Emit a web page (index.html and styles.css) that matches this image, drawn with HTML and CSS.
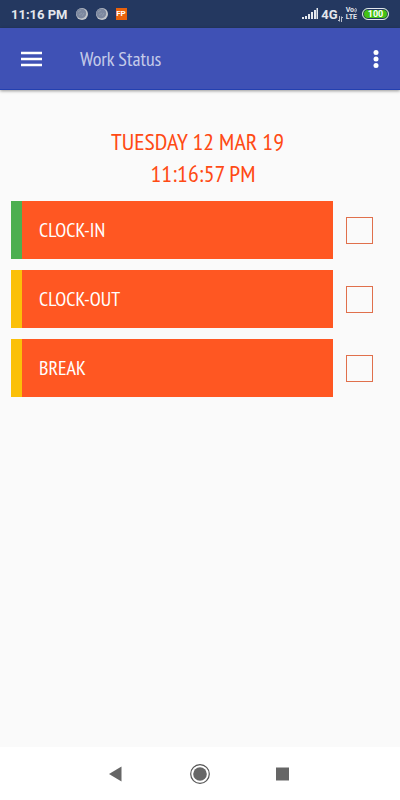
FILE: index.html
```html
<!DOCTYPE html>
<html lang="en">
<head>
<meta charset="utf-8">
<meta name="viewport" content="width=device-width, initial-scale=1">
<title>Work Status</title>
<link rel="stylesheet" href="styles.css">
</head>
<body>
<div class="status-bar">
  <span class="clock">11:16 PM</span>
  <svg class="moon" viewBox="0 0 12 12" aria-hidden="true"><circle cx="6" cy="6" r="6" fill="#c3c6ca"/><circle cx="5.2" cy="5.4" r="5" fill="#7d889f"/><path d="M2 4l3-2M3 7l3-2M6 8l2-3" stroke="#909bad" stroke-width="1"/></svg>
  <svg class="moon" viewBox="0 0 12 12" aria-hidden="true"><circle cx="6" cy="6" r="6" fill="#c3c6ca"/><circle cx="5.2" cy="5.4" r="5" fill="#7d889f"/><path d="M2 4l3-2M3 7l3-2M6 8l2-3" stroke="#909bad" stroke-width="1"/></svg>
  <span class="app-badge">FP</span>
  <div class="signals">
    <svg class="bars" viewBox="0 0 16 12" aria-hidden="true"><path d="M0 9h2v2H0zM3 8h2v3H3zM6 6h2v5H6zM9 4h2v7H9zM12 2h2v9h-2zM14.500 0H16v11h-1.500z" fill="#e4e7ed"/></svg>
    <span class="network">4G<svg class="arrows" viewBox="0 0 5 6" aria-hidden="true"><path d="M1.500 0v5M0 4l1.500 1.500M3.500 6V1M5 2L3.500.5" fill="none" stroke="#c9ced9" stroke-width=".9"/></svg></span>
    <span class="volte"><span class="volte-line">Vo<svg class="waves" viewBox="0 0 3 6" aria-hidden="true"><path d="M.5 2.500q1 1 0 2M1.500 1q2 2 0 4.500" fill="none" stroke="#e4e7ed" stroke-width=".8"/></svg></span><span class="volte-line">LTE</span></span>
    <span class="battery">100</span>
  </div>
</div>
<header class="app-bar">
  <button class="icon-button" type="button" aria-label="Menu"><svg class="menu-icon" viewBox="0 0 21 16"><path d="M0 2h21M0 8h21M0 14h21" stroke="#fff" stroke-width="2.300"/></svg></button>
  <h1 class="title">Work Status</h1>
  <button class="icon-button" type="button" aria-label="More options"><svg class="more-icon" viewBox="0 0 6 20"><g fill="#fff"><circle cx="3" cy="3.500" r="2.500"/><circle cx="3" cy="10" r="2.500"/><circle cx="3" cy="16.500" r="2.500"/></g></svg></button>
</header>
<main class="content">
  <div class="datetime"><div>TUESDAY 12 MAR 19</div><div class="time">11:16:57 PM</div></div>
  <div class="row"><button class="action active" type="button" id="clock-in">CLOCK-IN</button><input class="check" type="checkbox" aria-labelledby="clock-in"></div>
  <div class="row"><button class="action" type="button" id="clock-out">CLOCK-OUT</button><input class="check" type="checkbox" aria-labelledby="clock-out"></div>
  <div class="row"><button class="action" type="button" id="break">BREAK</button><input class="check" type="checkbox" aria-labelledby="break"></div>
</main>
<nav class="nav-bar" aria-label="System">
  <button class="icon-button" type="button" aria-label="Back"><svg class="nav-icon" viewBox="0 0 20 20"><path d="M3 10L15.500 2.500v15z" fill="#666"/></svg></button>
  <button class="icon-button" type="button" aria-label="Home"><svg class="nav-icon" viewBox="0 0 20 20"><circle cx="10" cy="10" r="9.300" fill="none" stroke="#555" stroke-width="1.200"/><circle cx="10" cy="10" r="6.800" fill="#666"/></svg></button>
  <button class="icon-button" type="button" aria-label="Recent apps"><svg class="nav-icon" viewBox="0 0 20 20"><path d="M2 3.500h13v13H2z" fill="#666"/></svg></button>
</nav>
</body>
</html>
```
FILE: styles.css
```css
* {
  box-sizing: border-box;
}

body {
  margin: 0;
  min-height: 100vh;
  display: flex;
  flex-direction: column;
  background: #fafafa;
  font-family: "PT Sans Narrow", "Roboto Condensed", "Open Sans Condensed", "Noto Sans Condensed", Lato, sans-serif;
}

button {
  font-family: inherit;
  border: 0;
  cursor: pointer;
}

svg {
  display: block;
}

.status-bar {
  height: 28px;
  padding: 0 11px;
  display: flex;
  align-items: center;
  gap: 8px;
  background: #243860;
  color: #e4e7ed;
  font-family: Roboto, sans-serif;
  font-weight: 700;
}

.clock {
  font-size: 13px;
}

.moon {
  width: 12px;
  height: 12px;
}

.app-badge {
  width: 11px;
  height: 12px;
  background: #e8620c;
  color: #fff;
  font-size: 8px;
  line-height: 12px;
  text-align: center;
}

.signals {
  margin-left: auto;
  display: flex;
  align-items: center;
  gap: 3px;
}

.bars {
  width: 16px;
  height: 12px;
}

.network {
  display: flex;
  align-items: flex-end;
  font-size: 13px;
}

.arrows {
  width: 5px;
  height: 6px;
}

.volte {
  display: flex;
  flex-direction: column;
  font-size: 7px;
  line-height: 7px;
}

.volte-line {
  display: flex;
  height: 7px;
}

.waves {
  width: 3px;
  height: 6px;
}

.battery {
  width: 27px;
  height: 12px;
  margin-left: 2px;
  border: 1px solid #e4e7ed;
  border-radius: 6px;
  box-shadow: inset 0 0 0 1px #243860;
  background: #43c213;
  color: #fff;
  font-size: 9px;
  line-height: 10px;
  text-align: center;
}

.app-bar {
  height: 62px;
  padding: 0 21px;
  display: flex;
  align-items: center;
  background: #3f51b5;
  border-bottom: 1px solid #2340b0;
  box-shadow: 0 1px 3px rgba(0, 0, 0, 0.4);
}

.icon-button {
  padding: 0;
  background: none;
}

.menu-icon {
  width: 21px;
  height: 16px;
}

.title {
  flex: 1;
  margin: 0 0 0 38px;
  color: #c5cbe9;
  font-size: 20px;
  font-weight: 400;
}

.more-icon {
  width: 6px;
  height: 20px;
}

.content {
  flex: 1;
  padding: 36px 27px 0 11px;
  display: flex;
  flex-direction: column;
  gap: 11px;
}

.datetime {
  padding-left: 11px;
  color: #ff4a14;
  font-size: 24px;
  line-height: 32px;
  text-align: center;
}

.time {
  padding-left: 11px;
}

.row {
  display: flex;
  align-items: center;
  gap: 13px;
}

.action {
  flex: 1;
  height: 58px;
  padding: 0 17px;
  border-left: 11px solid #fbc008;
  background: #ff5722;
  color: #fff;
  font-size: 20px;
  text-align: left;
}

.active {
  border-left-color: #4caf50;
}

.check {
  appearance: none;
  width: 27px;
  height: 27px;
  margin: 0;
  border: 1px solid #e0704c;
  background: #fafafa;
}

.check:checked {
  background: #ff5722;
}

.nav-bar {
  height: 53px;
  display: flex;
  justify-content: center;
  align-items: center;
  gap: 64px;
  background: #fff;
}

.nav-icon {
  width: 20px;
  height: 20px;
}
```
